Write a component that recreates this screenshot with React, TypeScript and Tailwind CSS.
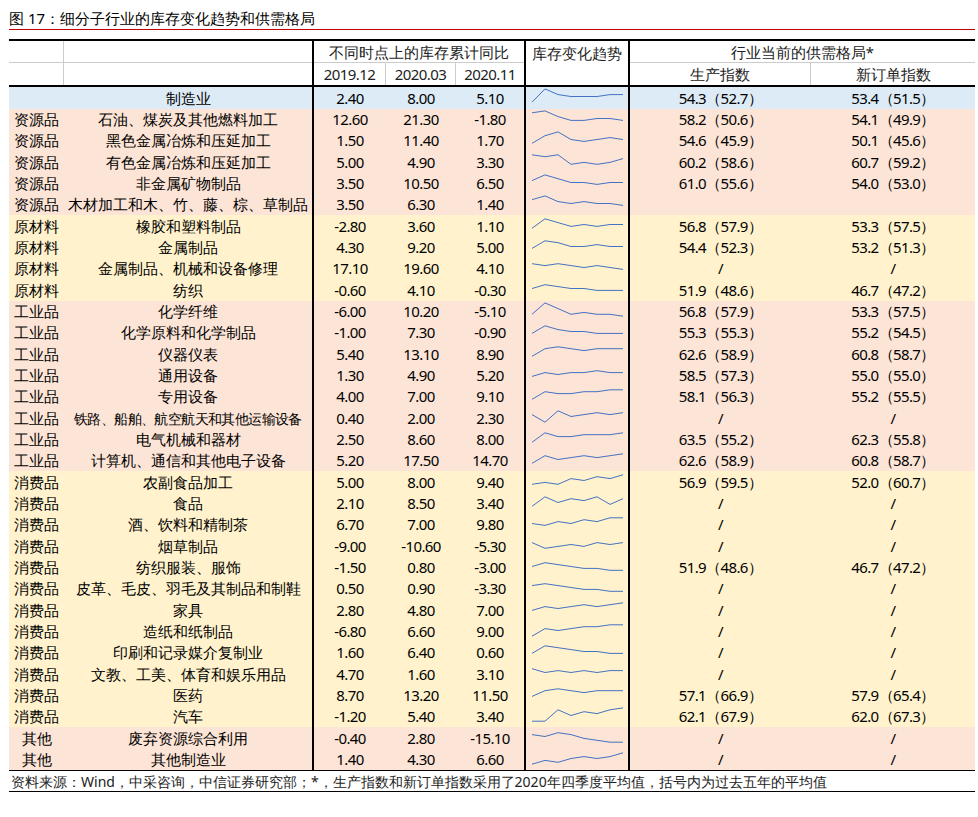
const rows: [string, string, string, string, string, string, string, number[]][] = [
  ["", "制造业", "2.40", "8.00", "5.10", "54.3（52.7）", "53.4（51.5）", [2, 9, 6, 5, 5, 5, 6, 6]],
  ["资源品", "石油、煤炭及其他燃料加工", "12.60", "21.30", "-1.80", "58.2（50.6）", "54.1（49.9）", [8, 9, 6, 4, 4, 5, 5, 4]],
  ["资源品", "黑色金属冶炼和压延加工", "1.50", "11.40", "1.70", "54.6（45.9）", "50.1（45.6）", [3, 7, 9, 5, 4, 5, 6, 5]],
  ["资源品", "有色金属冶炼和压延加工", "5.00", "4.90", "3.30", "60.2（58.6）", "60.7（59.2）", [8, 7, 8, 3, 4, 3, 4, 6]],
  ["资源品", "非金属矿物制品", "3.50", "10.50", "6.50", "61.0（55.6）", "54.0（53.0）", [6, 9, 7, 5, 5, 4, 5, 5]],
  ["资源品", "木材加工和木、竹、藤、棕、草制品", "3.50", "6.30", "1.40", "", "", [7, 9, 6, 5, 6, 5, 5, 4]],
  ["原材料", "橡胶和塑料制品", "-2.80", "3.60", "1.10", "56.8（57.9）", "53.3（57.5）", [3, 8, 6, 4, 5, 4, 5, 5]],
  ["原材料", "金属制品", "4.30", "9.20", "5.00", "54.4（52.3）", "53.2（51.3）", [4, 8, 7, 5, 5, 6, 5, 5]],
  ["原材料", "金属制品、机械和设备修理", "17.10", "19.60", "4.10", "/", "/", [7, 6, 7, 6, 5, 6, 5, 4]],
  ["原材料", "纺织", "-0.60", "4.10", "-0.30", "51.9（48.6）", "46.7（47.2）", [5, 7, 6, 5, 5, 4, 4, 4]],
  ["工业品", "化学纤维", "-6.00", "10.20", "-5.10", "56.8（57.9）", "53.3（57.5）", [3, 9, 6, 3, 4, 3, 3, 2]],
  ["工业品", "化学原料和化学制品", "-1.00", "7.30", "-0.90", "55.3（55.3）", "55.2（54.5）", [4, 8, 6, 5, 5, 4, 4, 4]],
  ["工业品", "仪器仪表", "5.40", "13.10", "8.90", "62.6（58.9）", "60.8（58.7）", [3, 7, 8, 7, 6, 7, 7, 7]],
  ["工业品", "通用设备", "1.30", "4.90", "5.20", "58.5（57.3）", "55.0（55.0）", [4, 6, 5, 6, 6, 7, 6, 6]],
  ["工业品", "专用设备", "4.00", "7.00", "9.10", "58.1（56.3）", "55.2（55.5）", [3, 7, 6, 6, 7, 7, 8, 8]],
  ["工业品", "铁路、船舶、航空航天和其他运输设备", "0.40", "2.00", "2.30", "/", "/", [6, 2, 8, 5, 6, 7, 6, 7]],
  ["工业品", "电气机械和器材", "2.50", "8.60", "8.00", "63.5（55.2）", "62.3（55.8）", [3, 8, 6, 6, 7, 7, 7, 8]],
  ["工业品", "计算机、通信和其他电子设备", "5.20", "17.50", "14.70", "62.6（58.9）", "60.8（58.7）", [3, 7, 5, 6, 7, 6, 7, 8]],
  ["消费品", "农副食品加工", "5.00", "8.00", "9.40", "56.9（59.5）", "52.0（60.7）", [3, 4, 3, 6, 5, 7, 6, 8]],
  ["消费品", "食品", "2.10", "8.50", "3.40", "/", "/", [3, 8, 5, 7, 6, 8, 4, 7]],
  ["消费品", "酒、饮料和精制茶", "6.70", "7.00", "9.80", "/", "/", [5, 4, 6, 5, 7, 6, 8, 8]],
  ["消费品", "烟草制品", "-9.00", "-10.60", "-5.30", "/", "/", [6, 3, 4, 5, 4, 6, 5, 6]],
  ["消费品", "纺织服装、服饰", "-1.50", "0.80", "-3.00", "51.9（48.6）", "46.7（47.2）", [5, 7, 6, 5, 4, 4, 3, 3]],
  ["消费品", "皮革、毛皮、羽毛及其制品和制鞋", "0.50", "0.90", "-3.30", "/", "/", [6, 7, 6, 5, 4, 4, 3, 3]],
  ["消费品", "家具", "2.80", "4.80", "7.00", "/", "/", [4, 6, 5, 6, 7, 6, 7, 8]],
  ["消费品", "造纸和纸制品", "-6.80", "6.60", "9.00", "/", "/", [2, 6, 5, 6, 7, 7, 8, 8]],
  ["消费品", "印刷和记录媒介复制业", "1.60", "6.40", "0.60", "/", "/", [4, 8, 7, 6, 5, 5, 4, 4]],
  ["消费品", "文教、工美、体育和娱乐用品", "4.70", "1.60", "3.10", "/", "/", [7, 5, 6, 5, 6, 5, 6, 6]],
  ["消费品", "医药", "8.70", "13.20", "11.50", "57.1（66.9）", "57.9（65.4）", [4, 7, 8, 7, 6, 7, 7, 7]],
  ["消费品", "汽车", "-1.20", "5.40", "3.40", "62.1（67.9）", "62.0（67.3）", [2, 2, 8, 5, 7, 6, 8, 9]],
  ["其他", "废弃资源综合利用", "-0.40", "2.80", "-15.10", "/", "/", [6, 5, 7, 6, 4, 3, 2, 2]],
  ["其他", "其他制造业", "1.40", "4.30", "6.60", "/", "/", [2, 4, 3, 5, 6, 5, 6, 8]],
];

const bg: Record<string, string> = {
  "": "bg-[#ddebf7]",
  资源品: "bg-[#fce4d6]",
  原材料: "bg-[#fff2cc]",
  工业品: "bg-[#fce4d6]",
  消费品: "bg-[#fff2cc]",
  其他: "bg-[#fce4d6]",
};

function Spark({ pts }: { pts: number[] }) {
  const d = pts.map((v, i) => `${6 + i * 13},${19 - v * 1.9}`).join(" ");
  return (
    <svg width="104" height="21" className="block">
      <polyline points={d} fill="none" stroke="#4472c4" strokeWidth="1" />
    </svg>
  );
}

const num = "font-['Liberation_Sans',sans-serif] text-[15px] tracking-[-0.6px]";

export default function App() {
  return (
    <div className="w-[978px] h-[817px] bg-white font-['Noto_Sans_CJK_SC',sans-serif] text-[15px] text-black">
      <div className="ml-[9px] w-[966px] pt-[8px]">
        <div className="h-[20px] leading-[20px] text-[15px] border-b border-[#c00000] box-content pb-[1px]">图 17：细分子行业的库存变化趋势和供需格局</div>
        <div className="mt-[9px] border-t-2 border-black">
          <div className="flex h-[46px] border-b-2 border-black text-[#222]">
            <div className="w-[55px] border-r border-[#ccc] flex flex-col"><div className="h-[22px] border-b border-[#ccc]" /></div>
            <div className="w-[250px] border-r-2 border-black flex flex-col"><div className="h-[22px] border-b border-[#ccc]" /></div>
            <div className="w-[212px] border-r-2 border-black flex flex-col">
              <div className="h-[22px] leading-[22px] text-center border-b border-[#ccc]">不同时点上的库存累计同比</div>
              <div className={`flex flex-1 leading-[22px] ${num}`}>
                <div className="w-[72px] text-center border-r border-[#ccc]">2019.12</div>
                <div className="w-[70px] text-center border-r border-[#ccc]">2020.03</div>
                <div className="flex-1 text-center">2020.11</div>
              </div>
            </div>
            <div className="w-[104px] border-r-2 border-black text-center leading-[20px] pt-[2px]">库存变化趋势</div>
            <div className="flex-1 flex flex-col">
              <div className="h-[22px] leading-[22px] text-center border-b border-[#ccc]">行业当前的供需格局*</div>
              <div className="flex flex-1 leading-[22px]">
                <div className="w-[181px] text-center border-r border-[#ccc]">生产指数</div>
                <div className="flex-1 text-center">新订单指数</div>
              </div>
            </div>
          </div>
          {rows.map((r, i) => (
            <div key={i} className={`flex shrink-0 items-center ${i % 3 === 0 ? "h-[22px]" : "h-[21px]"} ${bg[r[0]]}`}>
              <div className="w-[55px] text-center">{r[0]}</div>
              <div className={`w-[250px] h-full flex items-center justify-center border-r-2 border-black whitespace-nowrap overflow-hidden ${r[1].length > 16 ? "text-[14px] tracking-[-0.6px]" : ""}`}>{r[1]}</div>
              <div className={`w-[72px] text-center ${num}`}>{r[2]}</div>
              <div className={`w-[70px] text-center ${num}`}>{r[3]}</div>
              <div className={`w-[70px] h-full flex items-center justify-center border-r-2 border-black ${num}`}>{r[4]}</div>
              <div className="w-[104px] h-full border-r-2 border-black"><Spark pts={r[7]} /></div>
              <div className={`w-[181px] text-center ${num}`}>{r[5]}</div>
              <div className={`flex-1 text-center ${num}`}>{r[6]}</div>
            </div>
          ))}
          <div className="h-[22px] leading-[22px] border-t border-black border-b border-black text-[14px] px-[2px] text-[#222]">
            资料来源：Wind，中采咨询，中信证券研究部；*，生产指数和新订单指数采用了2020年四季度平均值，括号内为过去五年的平均值
          </div>
        </div>
      </div>
    </div>
  );
}
